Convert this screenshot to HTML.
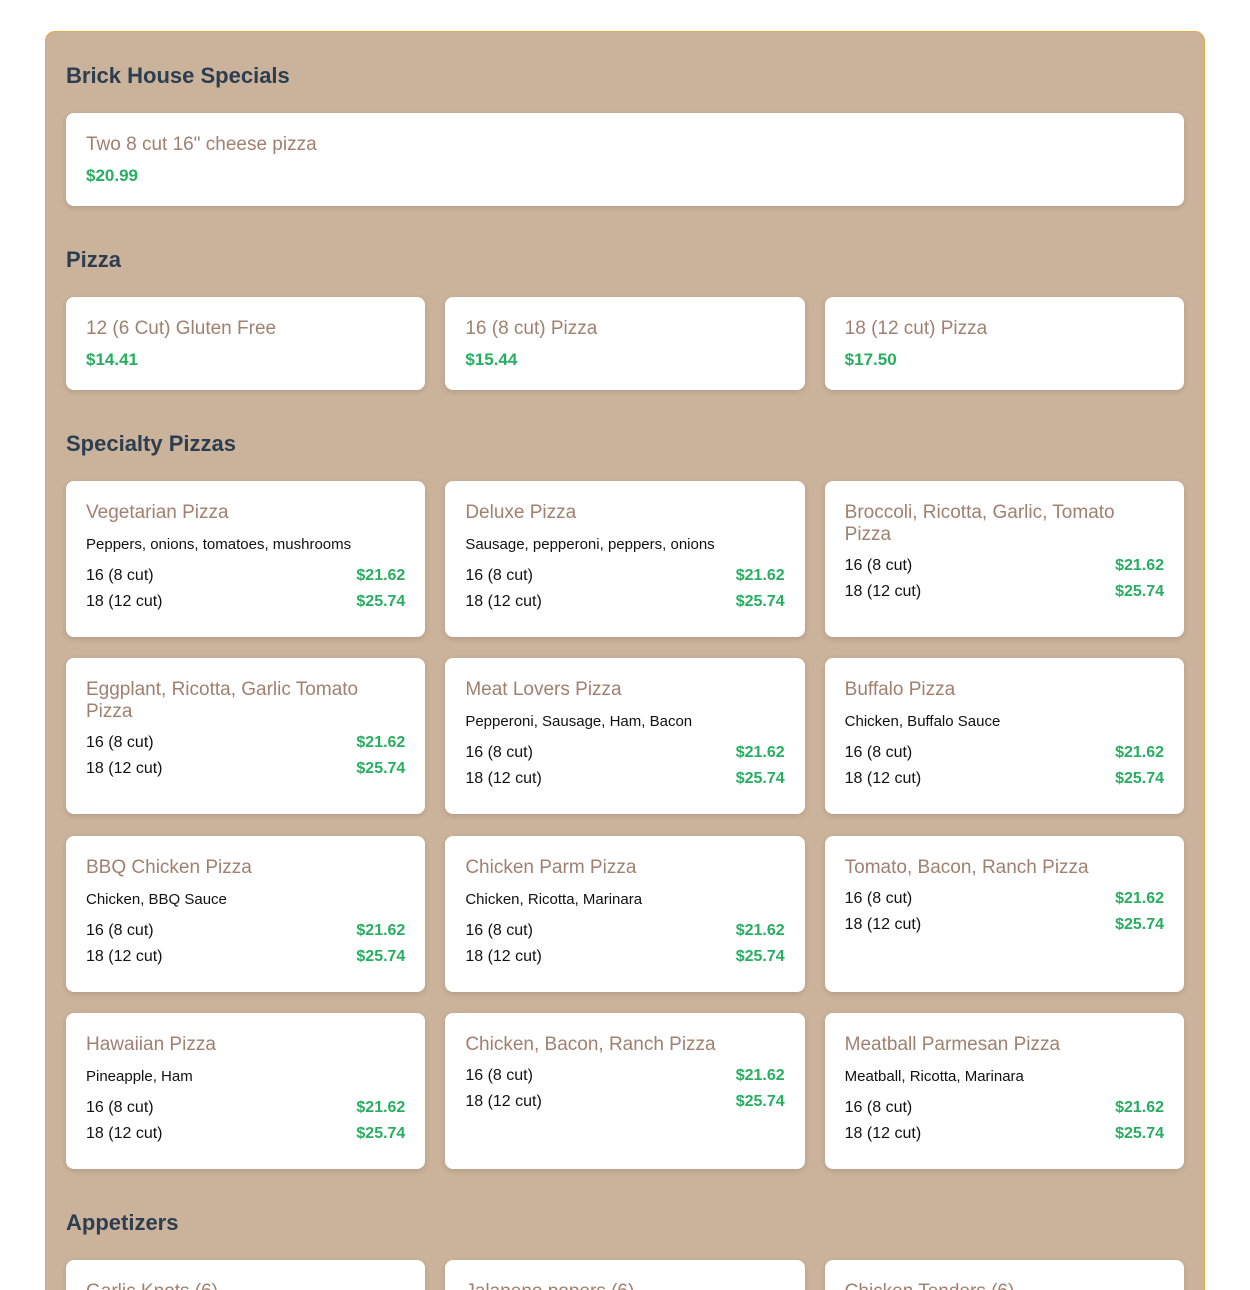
<!DOCTYPE html>
<html><head><meta charset="utf-8"><style>
*{box-sizing:border-box;margin:0;padding:0}
html,body{height:1290px;overflow:hidden}
body{background:#fff;font-family:"Liberation Sans",sans-serif;width:1250px;position:relative}
.wrap{position:absolute;left:45px;top:31px;width:1160px;height:1320px;background:#cbb29a;border:1px solid #e8a84a;border-radius:10px;padding:20px 20px}
h2{font-size:22px;line-height:26px;color:#2c3e50;font-weight:bold;margin:11px 0 24px}
h2.n{margin-top:41px}
.grid{display:grid;grid-template-columns:1fr 1fr 1fr;column-gap:20px;row-gap:21px}
.sp{row-gap:21.3px}
.card{background:#fff;border-radius:8px;padding:21px 20px 19px;box-shadow:0 2px 6px rgba(0,0,0,.12);min-height:93px}
.sp .card{height:156px}
.nm{font-size:19px;line-height:22px;color:#a08070}
.pr{font-size:17px;line-height:20px;color:#27ae60;font-weight:bold;margin-top:10px}
.ds{font-size:15px;line-height:20px;color:#111;margin:11px 0 8px}
.rows{margin-top:7px}
.r{display:flex;justify-content:space-between;font-size:16px;line-height:26px;color:#111}
.r b{color:#27ae60;font-size:16px}
</style></head><body><div class="wrap">
<h2>Brick House Specials</h2>
<div class="card"><div class="nm">Two 8 cut 16" cheese pizza</div><div class="pr">$20.99</div></div>
<h2 class="n">Pizza</h2>
<div class="grid">
<div class="card"><div class="nm">12 (6 Cut) Gluten Free</div><div class="pr">$14.41</div></div>
<div class="card"><div class="nm">16 (8 cut) Pizza</div><div class="pr">$15.44</div></div>
<div class="card"><div class="nm">18 (12 cut) Pizza</div><div class="pr">$17.50</div></div>
</div>
<h2 class="n">Specialty Pizzas</h2>
<div class="grid sp">
<div class="card"><div class="nm">Vegetarian Pizza</div><div class="ds">Peppers, onions, tomatoes, mushrooms</div><div class="r">16 (8 cut)<b>$21.62</b></div><div class="r">18 (12 cut)<b>$25.74</b></div></div>
<div class="card"><div class="nm">Deluxe Pizza</div><div class="ds">Sausage, pepperoni, peppers, onions</div><div class="r">16 (8 cut)<b>$21.62</b></div><div class="r">18 (12 cut)<b>$25.74</b></div></div>
<div class="card"><div class="nm">Broccoli, Ricotta, Garlic, Tomato Pizza</div><div class="rows"><div class="r">16 (8 cut)<b>$21.62</b></div><div class="r">18 (12 cut)<b>$25.74</b></div></div></div>
<div class="card"><div class="nm">Eggplant, Ricotta, Garlic Tomato Pizza</div><div class="rows"><div class="r">16 (8 cut)<b>$21.62</b></div><div class="r">18 (12 cut)<b>$25.74</b></div></div></div>
<div class="card"><div class="nm">Meat Lovers Pizza</div><div class="ds">Pepperoni, Sausage, Ham, Bacon</div><div class="r">16 (8 cut)<b>$21.62</b></div><div class="r">18 (12 cut)<b>$25.74</b></div></div>
<div class="card"><div class="nm">Buffalo Pizza</div><div class="ds">Chicken, Buffalo Sauce</div><div class="r">16 (8 cut)<b>$21.62</b></div><div class="r">18 (12 cut)<b>$25.74</b></div></div>
<div class="card"><div class="nm">BBQ Chicken Pizza</div><div class="ds">Chicken, BBQ Sauce</div><div class="r">16 (8 cut)<b>$21.62</b></div><div class="r">18 (12 cut)<b>$25.74</b></div></div>
<div class="card"><div class="nm">Chicken Parm Pizza</div><div class="ds">Chicken, Ricotta, Marinara</div><div class="r">16 (8 cut)<b>$21.62</b></div><div class="r">18 (12 cut)<b>$25.74</b></div></div>
<div class="card"><div class="nm">Tomato, Bacon, Ranch Pizza</div><div class="rows"><div class="r">16 (8 cut)<b>$21.62</b></div><div class="r">18 (12 cut)<b>$25.74</b></div></div></div>
<div class="card"><div class="nm">Hawaiian Pizza</div><div class="ds">Pineapple, Ham</div><div class="r">16 (8 cut)<b>$21.62</b></div><div class="r">18 (12 cut)<b>$25.74</b></div></div>
<div class="card"><div class="nm">Chicken, Bacon, Ranch Pizza</div><div class="rows"><div class="r">16 (8 cut)<b>$21.62</b></div><div class="r">18 (12 cut)<b>$25.74</b></div></div></div>
<div class="card"><div class="nm">Meatball Parmesan Pizza</div><div class="ds">Meatball, Ricotta, Marinara</div><div class="r">16 (8 cut)<b>$21.62</b></div><div class="r">18 (12 cut)<b>$25.74</b></div></div>
</div>
<h2 class="n" style="margin-top:41px">Appetizers</h2>
<div class="grid">
<div class="card"><div class="nm">Garlic Knots (6)</div></div>
<div class="card"><div class="nm">Jalapeno popers (6)</div></div>
<div class="card"><div class="nm">Chicken Tenders (6)</div></div>
</div>
</div></body></html>
